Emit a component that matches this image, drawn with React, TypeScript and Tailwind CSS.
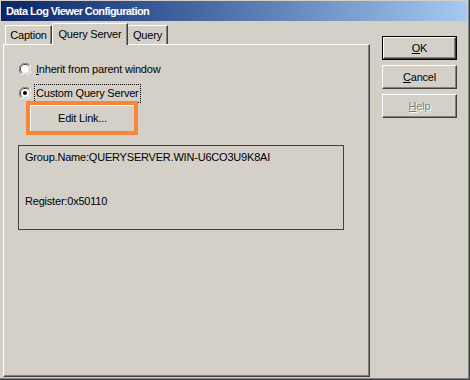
import React from "react";

const font = { fontFamily: '"Liberation Sans", Arial, sans-serif', letterSpacing: "-0.2px" };

function Radio({ checked }: { checked: boolean }) {
  return (
    <svg width="12" height="12" viewBox="0 0 12 12" className="shrink-0">
      <path d="M 10.5 2 A 5.5 5.5 0 0 0 2 10.5" fill="none" stroke="#808080" strokeWidth="1" />
      <path d="M 2 10.5 A 5.5 5.5 0 0 0 10.5 2" fill="none" stroke="#ffffff" strokeWidth="1" />
      <path d="M 9.5 2.8 A 4.5 4.5 0 0 0 2.8 9.5" fill="none" stroke="#404040" strokeWidth="1" />
      <path d="M 2.8 9.5 A 4.5 4.5 0 0 0 9.5 2.8" fill="none" stroke="#d4d0c8" strokeWidth="1" />
      <circle cx="6" cy="6" r="4" fill="#ffffff" />
      {checked && <circle cx="6" cy="6" r="2" fill="#000000" />}
    </svg>
  );
}

function Btn({
  children,
  isDefault,
  disabled,
}: {
  children: React.ReactNode;
  isDefault?: boolean;
  disabled?: boolean;
}) {
  const inner = (
    <div className="flex-1 flex items-center justify-center border-t border-l border-t-white border-l-white border-r border-b border-r-[#404040] border-b-[#404040] shadow-[inset_-1px_-1px_#808080]">
      <span
        className={
          disabled
            ? "text-[11px] text-[#808080] [text-shadow:1px_1px_0_#ffffff]"
            : "text-[11px] text-black"
        }
      >
        {children}
      </span>
    </div>
  );
  return (
    <div
      className={
        isDefault
          ? "w-[75px] h-[24px] flex border border-black"
          : "w-[75px] h-[24px] flex"
      }
    >
      {inner}
    </div>
  );
}

export default function App() {
  return (
    <div
      className="w-[470px] h-[380px] bg-[#d4d0c8] border-r border-b border-r-[#404040] border-b-[#404040] flex"
      style={font}
    >
      <div className="flex-1 flex flex-col border-r border-b border-r-[#808080] border-b-[#808080] pl-[1px] pt-[1px] pr-[1px]">
        <div className="h-[20px] shrink-0 bg-gradient-to-r from-[#0a246a] to-[#a6caf0] flex items-center pl-[5px]">
          <span className="text-white font-bold text-[11px] tracking-[-0.6px]">Data Log Viewer Configuration</span>
        </div>
        <div className="flex-1 flex">
          <div className="ml-[2px] mt-[2px] w-[367px] flex flex-col">
            <div className="h-[21px] flex items-end pl-[2px]">
              <div className="w-[47px] h-[19px] flex items-center justify-center border-t border-l border-t-white border-l-white border-r border-r-[#404040] shadow-[inset_-1px_0_#808080] rounded-tl-[2px]">
                <span className="text-[11px] text-black">Caption</span>
              </div>
              <div className="relative z-10 w-[76px] h-[22px] -mb-[1px] bg-[#d4d0c8] flex items-start justify-center pt-[2px] border-t border-l border-t-white border-l-white border-r border-r-[#404040] shadow-[inset_-1px_0_#808080] rounded-tl-[2px]">
                <span className="text-[11px] text-black">Query Server</span>
              </div>
              <div className="w-[40px] h-[19px] flex items-center justify-center border-t border-t-white border-r border-r-[#404040] shadow-[inset_-1px_0_#808080]">
                <span className="text-[11px] text-black">Query</span>
              </div>
            </div>
            <div className="h-[333px] border-t border-l border-t-white border-l-white border-r border-b border-r-[#404040] border-b-[#404040] shadow-[inset_-1px_-1px_#808080] flex flex-col pl-[15px] pt-[18px]">
              <div className="flex items-center h-[12px]">
                <Radio checked={false} />
                <span className="ml-[5px] text-[11px] text-black leading-none">
                  <span className="underline underline-offset-1">I</span>nherit from parent window
                </span>
              </div>
              <div className="flex items-center h-[12px] mt-[12px]">
                <Radio checked={true} />
                <span className="ml-[4px] text-[11px] text-black leading-none px-[1px] py-[3px] outline outline-1 outline-dotted outline-black">
                  Custom Query Server
                </span>
              </div>
              <div className="mt-[2px] ml-[7px] w-[112px] h-[34px] border-4 border-[#f7853a] flex">
                <div className="flex-1 flex items-center justify-center border-t border-l border-t-white border-l-white">
                  <span className="text-[11px] text-black">Edit Link...</span>
                </div>
              </div>
              <div className="mt-[10px] -ml-[1px] w-[326px] h-[85px] border border-[#404040] flex flex-col pl-[6px] pt-[5px]">
                <span className="text-[11px] text-black leading-[13px]">Group.Name:QUERYSERVER.WIN-U6CO3U9K8AI</span>
                <span className="mt-[31px] text-[11px] text-black leading-[13px]">Register:0x50110</span>
              </div>
            </div>
          </div>
          <div className="ml-[12px] mt-[15px] flex flex-col gap-[5px]">
            <Btn isDefault>
              <span className="underline underline-offset-1">O</span>K
            </Btn>
            <Btn>
              <span className="underline underline-offset-1">C</span>ancel
            </Btn>
            <Btn disabled>
              <span className="underline underline-offset-1">H</span>elp
            </Btn>
          </div>
        </div>
      </div>
    </div>
  );
}
